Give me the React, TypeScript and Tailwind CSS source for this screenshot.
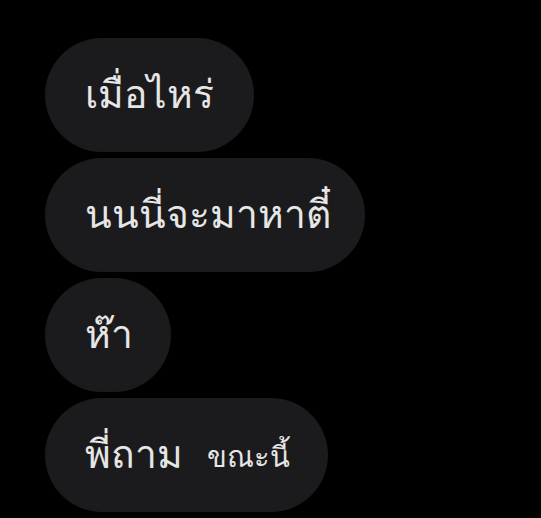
export default function App() {
  const font = { fontFamily: '"Liberation Sans", sans-serif' };
  const bubble = "flex items-center h-[114px] rounded-full bg-[#1b1b1d] pl-[40px] text-[#e6e6e6] text-[39px] self-start";
  return (
    <div className="w-[541px] h-[518px] bg-black overflow-hidden pt-[38px] pl-[45px]" style={font}>
      <div className="flex flex-col gap-[6px]">
        <div className={`${bubble} pr-[40px]`}>เมื่อไหร่</div>
        <div className={`${bubble} pr-[34px]`}>นนนี่จะมาหาตี๋</div>
        <div className={`${bubble} pr-[38px]`}>ห๊า</div>
        <div className={`${bubble} pr-[38px]`}>
          <span>พี่ถาม</span>
          <span className="ml-[24px] text-[29px] mt-[6px]">ขณะนี้</span>
        </div>
      </div>
    </div>
  );
}
